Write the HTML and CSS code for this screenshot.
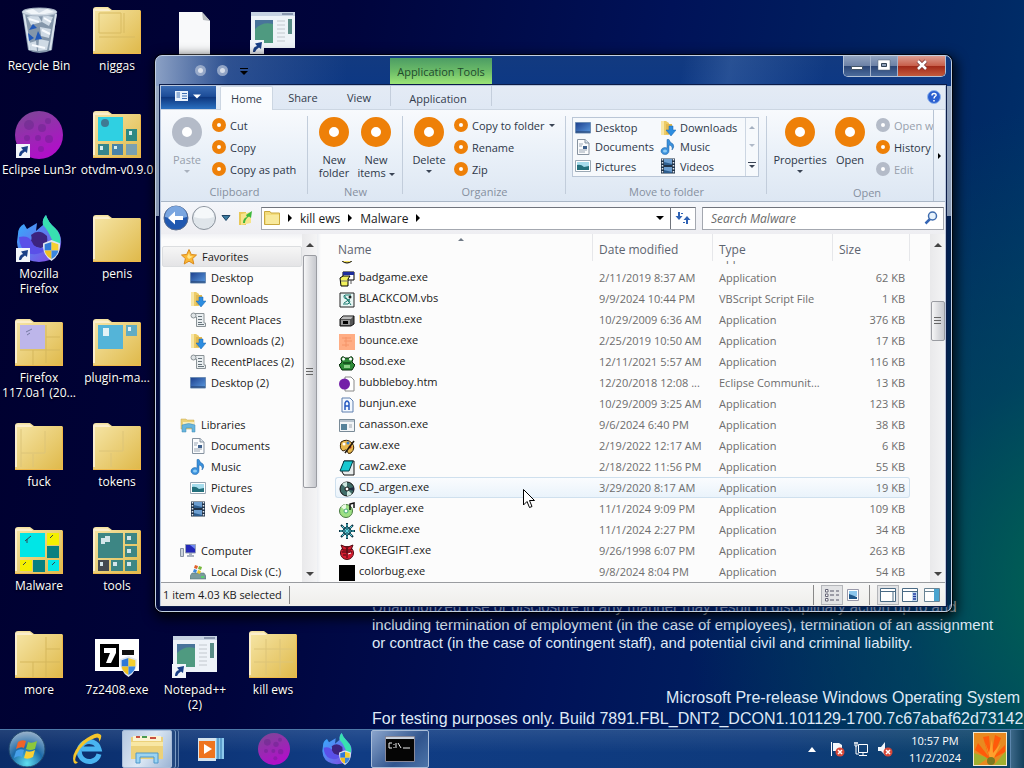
FILE: index.html
```html
<!DOCTYPE html>
<html lang="en">
<head>
    <meta charset="UTF-8">
    <meta name="viewport" content="width=device-width, initial-scale=1.0">
    <title>Malware</title>
    <link rel="stylesheet" href="styles.css">
</head>
<body>
    <!-- shared icons -->
    <svg class="sprite" width="0" height="0">
        <defs>
            <linearGradient id="gold" x1="0" y1="0" x2="1" y2="1">
                <stop offset="0" stop-color="#f6e6a8"/>
                <stop offset="1" stop-color="#dfb94a"/>
            </linearGradient>
            <linearGradient id="blue" x1="0" y1="0" x2="1" y2="1">
                <stop offset="0" stop-color="#1c3f8c"/>
                <stop offset="1" stop-color="#5c9be0"/>
            </linearGradient>
            <linearGradient id="fire" x1="0" y1="0" x2="1" y2="1">
                <stop offset="0" stop-color="#2fb6ff"/>
                <stop offset="1" stop-color="#8a3fe0"/>
            </linearGradient>
            <linearGradient id="moon-fill" x1="0" y1="0" x2="0.4" y2="1">
                <stop offset="0" stop-color="#7a4a94"/>
                <stop offset="1" stop-color="#b010c8"/>
            </linearGradient>
            <radialGradient id="orb" cx="0.5" cy="0.9" r="0.9">
                <stop offset="0" stop-color="#5fe0f0"/>
                <stop offset="0.5" stop-color="#1c6aa8"/>
                <stop offset="1" stop-color="#9db4cc"/>
            </radialGradient>
        </defs>
        <symbol id="folder-big" viewBox="0 0 48 48">
            <path d="M0 3Q0 0 3 0H15L19 3H47.500V47H0Z" fill="url(#gold)"/>
            <path d="M1 1.500H15L18 4H2V44H0V3Z" fill="#fbeecb"/>
            <path d="M0 46.500H48M47.500 4V47" stroke="#f0b848"/>
        </symbol>
        <symbol id="shield" viewBox="0 0 18 20">
            <path d="M9 0L17 3Q18 14 9 20Q0 14 1 3Z" fill="#dfe6ee"/>
            <path d="M9 2V10H2.500V4Z" fill="#2f78d8"/>
            <path d="M9 2L15.500 4V10H9Z" fill="#f5d030"/>
            <path d="M2.500 10H9V18Q3 15 2.500 10Z" fill="#f0c020"/>
            <path d="M9 10H15.500Q15 15 9 18Z" fill="#3a86e0"/>
        </symbol>
        <symbol id="shortcut" viewBox="0 0 14 14">
            <path d="M0 0H14V14H0Z" fill="#f2f5fa"/>
            <path d="M3 12Q3 7 7 6L5 3.500L12 2L11 9L9 7.500Q6 9 5 12Z" fill="#1a3f86"/>
        </symbol>
        <symbol id="moon" viewBox="0 0 48 48">
            <circle cx="24" cy="24" r="24" fill="url(#moon-fill)"/>
            <g fill="#50207a" opacity="0.3">
                <circle cx="14" cy="14" r="5"/><circle cx="27" cy="17" r="4"/>
                <circle cx="23" cy="27" r="3"/><circle cx="34" cy="28" r="4"/>
                <circle cx="12" cy="27" r="3"/><circle cx="33" cy="10" r="3"/>
                <circle cx="26" cy="38" r="3"/>
            </g>
        </symbol>
        <symbol id="firefox" viewBox="0 0 48 48">
            <path d="M3 19Q3 12 9 9L12 14L22 8L21 16L28 10Q27 4 31 0Q33 7 40 13Q47 19 46 29Q44 46 24 47Q3 46 2 27Z" fill="url(#fire)"/>
            <path d="M28 10Q27 4 31 0Q33 7 40 13Q47 19 45 31Q40 36 37 25Q33 15 28 10Z" fill="#38e0b0"/>
            <path d="M16 20Q24 13 32 21Q34 30 26 33Q18 32 14 27Q18 25 16 20Z" fill="#3c2480"/>
            <path d="M4 22Q14 20 17 27Q20 35 32 33Q24 42 13 38Q4 33 4 22Z" fill="#5a50e8"/>
        </symbol>
        <symbol id="panel-app" viewBox="0 0 44 36">
            <path d="M0 0H44V36H0Z" fill="#eef3f8"/>
            <path d="M0 0H44V4H0Z" fill="#c6d2e2"/>
            <path d="M31 1H42V3H31Z" fill="#8a98b0"/>
            <path d="M4 8H22V31H4Z" fill="#49749a"/>
            <path d="M4 17Q12 9 22 12V31H4Z" fill="#4f9a80"/>
            <path d="M26 9H34M26 13H34M26 17H34M26 21H34M26 25H34M26 29H34" stroke="#c2c8ce" stroke-width="1"/>
            <path d="M37 7H41V22H37Z" fill="#598c86"/>
        </symbol>

        <symbol id="desktop" viewBox="0 0 16 16">
            <path d="M0.500 2.500H15.500V13H0.500Z" fill="url(#blue)" stroke="#6d8db4"/>
            <path d="M1 12H15" stroke="#1f3b66"/>
        </symbol>
        <symbol id="downloads" viewBox="0 0 16 16">
            <path d="M1 1H6L9 3V15H1Z" fill="#eccb66"/>
            <path d="M1 1H4V15H1Z" fill="#f8e6a4"/>
            <path d="M6 4H12V14H6Z" fill="#e0b850"/>
            <path d="M9 6H13V10H16L11 16L6 10H9Z" fill="#2c8de0" stroke="#1a66b0" stroke-width="0.500"/>
        </symbol>
        <symbol id="recent" viewBox="0 0 16 16">
            <path d="M4 1.500H14V11H15.500V14.500H6.500V5H2Q1 2 4 1.500Z" fill="#e9eef0" stroke="#8a9296"/>
            <path d="M8 4.500H12M8 7.500H12M8 10.500H12M8 12.500H14" stroke="#67747c"/>
            <circle cx="3.500" cy="3.500" r="2.500" fill="#dfe4e6" stroke="#8a9296"/>
        </symbol>
        <symbol id="documents" viewBox="0 0 16 16">
            <path d="M2.500 0.500H10L14 4V15.500H2.500Z" fill="#fbfcfd" stroke="#8793a0"/>
            <path d="M10 0.500V4H14" fill="#dce4ec" stroke="#8793a0"/>
            <path d="M4 5H8M4 7H7M4 11H12M4 13H10" stroke="#9aa6b4"/>
            <path d="M8 7H12V10H8Z" fill="#3f618c"/>
        </symbol>
        <symbol id="music" viewBox="0 0 16 16">
            <path d="M7 0.500H9Q10 4 13 5Q15 8 12 11Q13 7 9 6V12A4 3.500 0 1 1 7 9Z" fill="#3b91dc" stroke="#1c60a4" stroke-width="0.500"/>
            <ellipse cx="5" cy="12" rx="2" ry="1.500" fill="#8ccbf5"/>
        </symbol>
        <symbol id="pictures" viewBox="0 0 16 16">
            <path d="M0.500 2.500H15.500V13.500H0.500Z" fill="#fff" stroke="#9aa8b4"/>
            <path d="M2 4H14V12H2Z" fill="#a6dcec"/>
            <path d="M2 7Q6 6 9 9L14 8V12H2Z" fill="#23707c"/>
        </symbol>
        <symbol id="videos" viewBox="0 0 16 16">
            <path d="M1 0.500H15V15.500H1Z" fill="#1f3248"/>
            <path d="M4 1H12V7H4ZM4 9H12V15H4Z" fill="#6c9ed0"/>
            <path d="M4 4L12 6V7H4ZM4 12L12 14V15H4Z" fill="#2d5d8e"/>
            <path d="M2.500 1V15M13.500 1V15" stroke="#e5ecf4" stroke-width="1.500" stroke-dasharray="1.500 1.500"/>
        </symbol>
        <symbol id="star" viewBox="0 0 16 16">
            <path d="M8 0.500L10.300 5.500L15.500 6L11.600 9.600L12.800 15L8 12.200L3.200 15L4.400 9.600L0.500 6L5.700 5.500Z" fill="#fbb836" stroke="#d98a1c"/>
            <path d="M8 4L9 7L12 7.500L8 10L6 8Z" fill="#ffe58a"/>
        </symbol>
        <symbol id="libraries" viewBox="0 0 16 16">
            <path d="M1 2H6L7 3H14V12H1Z" fill="#ecd27a" stroke="#c8a850" stroke-width="0.500"/>
            <path d="M3 5H14V9H3Z" fill="#f8eebc"/>
            <path d="M2 8Q9 5 15 8V15H12V11H6V15H2Z" fill="#69b5dc" stroke="#3f88b4" stroke-width="0.500"/>
        </symbol>
        <symbol id="computer" viewBox="0 0 16 16">
            <path d="M5.500 1.500H15.500V10H5.500Z" fill="#2428b8" stroke="#9aa4b8"/>
            <path d="M10 2H15V6Z" fill="#6f88f0"/>
            <path d="M9 10H12V12H14V14H7V12H9Z" fill="#a9b2c0"/>
            <path d="M0.500 5.500H3.500V13.500H0.500Z" fill="#ccd4dc" stroke="#8792a2"/>
        </symbol>
        <symbol id="disk" viewBox="0 0 16 16">
            <path d="M2 9H14L16 12V15H0V12Z" fill="#7a9a9c" stroke="#4d6e72" stroke-width="0.500"/>
            <path d="M11 13H14" stroke="#4ce060" stroke-width="1.500"/>
            <path d="M5 1L8 2L7 5L4 4Z" fill="#e0622c"/><path d="M9 2L12 3L11 6L8 5Z" fill="#78b83c"/>
            <path d="M4 5L7 6L6 9L3 8Z" fill="#3c88d8"/><path d="M8 6L11 7L10 10L7 9Z" fill="#f0c82c"/>
        </symbol>
        <symbol id="folder" viewBox="0 0 16 16">
            <path d="M0.500 1.500H6L7 3H15.500V14.500H0.500Z" fill="#f3dc7c" stroke="#cba93e"/>
            <path d="M2 5H15V14H2Z" fill="#f8e99c"/>
        </symbol>
    </svg>

    <main class="desktop">
        <ul class="icons">
            <li class="icon">
                <svg class="art" viewBox="0 0 48 48">
                    <path d="M7 4H42L37 43Q24 49 13 43Z" fill="#8496aa"/>
                    <path d="M9 7L15 43M41 7L35 43" stroke="#d8e2ec" stroke-width="2"/>
                    <path d="M12 10L22 7L27 15L16 18ZM28 8L38 10L34 19L27 15ZM25 20L36 22L34 31L26 29ZM24 32L34 34L32 43L23 44ZM14 36L21 34L22 44L16 43Z" fill="#cfdae5"/>
                    <path d="M14 12L24 15M27 23L35 27M17 38L30 41M29 11L36 15" stroke="#f8fbff" stroke-width="2"/>
                    <ellipse cx="24.500" cy="5" rx="17.500" ry="4" fill="#d2dbe5" stroke="#a9b7c6"/>
                    <path d="M10 4L18 2L24 6L32 2L39 5L30 7L16 7Z" fill="#f1f5f9"/>
                    <path d="M14 23L18 17L22 21ZM13 26L14 34L19 31ZM23 24L27 32L20 33Z" fill="#2258b8"/>
                </svg>
                <span>Recycle Bin</span>
            </li>
            <li class="icon">
                <svg class="art" viewBox="0 0 48 48"><use href="#folder-big"/><path d="M6 6H28V26H6ZM31 6V26M6 30H42" fill="none" stroke="#d8bb62"/></svg>
                <span>niggas</span>
            </li>
            <li class="icon">
                <svg class="art" viewBox="0 0 48 48"><path d="M8 5H31L39 14V48H8Z" fill="#f8f9fa"/><path d="M31 5L32 13L39 14Z" fill="#b8bcc0"/></svg>
            </li>
            <li class="icon">
                <svg class="art" viewBox="0 0 48 48"><use href="#panel-app" x="2" y="5" width="44" height="36"/><use href="#shortcut" x="1" y="33" width="14" height="14"/></svg>
            </li>

            <li class="icon first">
                <svg class="art" viewBox="0 0 48 48"><use href="#moon"/><use href="#shortcut" x="1" y="33" width="14" height="14"/></svg>
                <span>Eclipse Lun3r</span>
            </li>
            <li class="icon">
                <svg class="art" viewBox="0 0 48 48">
                    <use href="#folder-big"/>
                    <path d="M5 6H30V30H5Z" fill="#2fd0e2"/><path d="M33 18H44V30H33Z" fill="#2d8884"/>
                    <path d="M5 33H16V44H5Z" fill="#36868c"/><path d="M19 33H30V44H19Z" fill="#4a84a8"/><path d="M33 33H44V44H33Z" fill="#7aa0b0"/>
                    <circle cx="12" cy="12" r="4" fill="#3f7a94"/><path d="M7 35H10V39H7ZM21 35H24V38H21ZM36 20H39V24H36Z" fill="#d7eef0"/>
                </svg>
                <span>otvdm-v0.9.0</span>
            </li>

            <li class="icon first">
                <svg class="art" viewBox="0 0 48 48"><use href="#firefox"/><use href="#shield" x="27" y="25" width="19" height="21"/><use href="#shortcut" x="1" y="33" width="14" height="14"/></svg>
                <span>Mozilla<br>Firefox</span>
            </li>
            <li class="icon">
                <svg class="art" viewBox="0 0 48 48"><use href="#folder-big"/></svg>
                <span>penis</span>
            </li>

            <li class="icon first">
                <svg class="art" viewBox="0 0 48 48"><use href="#folder-big"/><path d="M31 6V44M5 31H45M18 31V46M31 18H45" stroke="#d5b75c"/><path d="M5 6H30V30H5Z" fill="#bdb6ea"/><path d="M11 13L17 10M12 16L15 14" stroke="#7378a0"/></svg>
                <span>Firefox<br>117.0a1 (20...</span>
            </li>
            <li class="icon">
                <svg class="art" viewBox="0 0 48 48"><use href="#folder-big"/><path d="M5 6H30V30H5Z" fill="#54b4d8"/><path d="M33 6H44V17H33Z" fill="#60acc4"/><path d="M10 9H16V17H10ZM35 8H38V12H35Z" fill="#e2f2f6"/></svg>
                <span>plugin-ma...</span>
            </li>

            <li class="icon first">
                <svg class="art" viewBox="0 0 48 48"><use href="#folder-big"/><path d="M6 6V30H30V8M6 30V44M18 31V44" fill="none" stroke="#dcc478"/></svg>
                <span>fuck</span>
            </li>
            <li class="icon">
                <svg class="art" viewBox="0 0 48 48"><use href="#folder-big"/><path d="M6 28H30V8M18 30V44" fill="none" stroke="#dcc478"/></svg>
                <span>tokens</span>
            </li>

            <li class="icon first">
                <svg class="art" viewBox="0 0 48 48">
                    <use href="#folder-big"/>
                    <path d="M5 6H30V30H5ZM33 33H44V44H33Z" fill="#00e6e6"/><path d="M32 6H44V18H32ZM5 33H17V44H5Z" fill="#f4f000"/>
                    <path d="M32 19H44V31H32ZM18 33H30V45H18Z" fill="#088080"/><path d="M10 14L16 9M12 16V12M35 11L38 8M8 38L11 35M37 38L40 35" stroke="#345"/>
                </svg>
                <span>Malware</span>
            </li>
            <li class="icon">
                <svg class="art" viewBox="0 0 48 48">
                    <use href="#folder-big"/>
                    <path d="M5 6H30V31H5ZM32 6H44V17H32ZM32 19H44V30H32ZM18 33H30V44H18ZM32 33H44V44H32Z" fill="#3d8684"/><path d="M5 33H16V44H5Z" fill="#444a50"/>
                    <path d="M8 11H12V17H8ZM12 9H17V15H12ZM34 9H38V13H34ZM34 22H38V26H34ZM20 35H24V39H20ZM34 35H38V39H34ZM7 35H10V39H7Z" fill="#d4e6ea"/>
                </svg>
                <span>tools</span>
            </li>

            <li class="icon first">
                <svg class="art" viewBox="0 0 48 48"><use href="#folder-big"/><path d="M31 6V31H5M31 18H45M31 31H45M18 31V46M31 31V46" fill="none" stroke="#d5b75c"/></svg>
                <span>more</span>
            </li>
            <li class="icon">
                <svg class="art" viewBox="0 0 48 48">
                    <path d="M2 8H46V40H2Z" fill="#fff"/><path d="M7 13H26V36H7Z" fill="#000"/>
                    <path d="M11 17H23V22L18 32H13L17 22H11Z" fill="#fff"/><path d="M29 19H41V24H29Z" fill="#111"/>
                    <use href="#shield" x="26" y="25" width="19" height="21"/>
                </svg>
                <span>7z2408.exe</span>
            </li>
            <li class="icon">
                <svg class="art" viewBox="0 0 48 48"><use href="#panel-app" x="2" y="5" width="44" height="36"/><use href="#shortcut" x="1" y="33" width="14" height="14"/></svg>
                <span>Notepad++<br>(2)</span>
            </li>
            <li class="icon">
                <svg class="art" viewBox="0 0 48 48"><use href="#folder-big"/><path d="M17 8V44M31 8V44M5 18H44M5 31H44" stroke="#dcc478"/></svg>
                <span>kill ews</span>
            </li>
        </ul>

        <div class="watermark">
            <p class="legal">Unauthorized use or disclosure in any manner may result in disciplinary action up to and<br>including termination of employment (in the case of employees), termination of an assignment<br>or contract (in the case of contingent staff), and potential civil and criminal liability.</p>
            <p class="system">Microsoft Pre-release Windows Operating System</p>
            <p class="build">For testing purposes only. Build 7891.FBL_DNT2_DCON1.101129-1700.7c67abaf62d73142</p>
        </div>

        <section class="window">
            <header class="title-bar">
                <div class="quick-access">
                    <span class="faint-ring"></span><span class="faint-ring"></span>
                    <svg width="10" height="8" viewBox="0 0 10 8"><path d="M1 1.500H9" stroke="#000"/><path d="M1 4H9L5 8Z" fill="#000"/></svg>
                </div>
                <div class="tools-tab">Application Tools</div>
                <div class="controls">
                    <button type="button" aria-label="Minimize"><svg width="14" height="12" viewBox="0 0 14 12"><path d="M1.500 7.500H12.500V10.500H1.500Z" fill="#fff" stroke="#456"/></svg></button>
                    <button type="button" aria-label="Maximize"><svg width="14" height="12" viewBox="0 0 14 12"><path d="M1 1H13V11H1Z" fill="#fff" stroke="#567" stroke-width="0.500"/><path d="M4.500 4.500H9.500V7.500H4.500Z" fill="#8fa0b8" stroke="#345"/></svg></button>
                    <button type="button" class="close" aria-label="Close"><svg width="14" height="12" viewBox="0 0 14 12"><path d="M3 2L11 10M11 2L3 10" stroke="#733" stroke-width="4"/><path d="M3 2L11 10M11 2L3 10" stroke="#fff" stroke-width="2.500"/></svg></button>
                </div>
            </header>

            <div class="client">
                <nav class="tabs">
                    <button type="button" class="file-tab" aria-label="File">
                        <svg width="30" height="12" viewBox="0 0 30 12"><path d="M1 1H14V11H1Z" fill="#e9f2fc"/><path d="M2.500 3H6M2.500 5H6M2.500 7H6M8 3.500H13M8 6H13M8 8.500H13" stroke="#3f70b4"/><path d="M19 4.500H27L23 8.500Z" fill="#fff"/></svg>
                    </button>
                    <button type="button" class="tab active">Home</button>
                    <button type="button" class="tab share">Share</button>
                    <button type="button" class="tab">View</button>
                    <button type="button" class="tab context">Application</button>
                    <button type="button" class="help" aria-label="Help"><svg width="14" height="14" viewBox="0 0 14 14"><circle cx="7" cy="7" r="6.500" fill="#2a5fd0" stroke="#8fb4ee"/><path d="M5 5.500Q5 3.500 7 3.500Q9.500 3.500 9 5.500Q7 7 7 8.500M7 10V11.500" fill="none" stroke="#fff" stroke-width="1.500"/></svg></button>
                </nav>

                <div class="ribbon">
                    <div class="group clipboard">
                        <div class="tools">
                            <button type="button" class="big" disabled><i class="ring"></i>Paste<b class="drop"></b></button>
                            <div class="stack">
                                <button type="button"><i class="ring"></i>Cut</button>
                                <button type="button"><i class="ring"></i>Copy</button>
                                <button type="button"><i class="ring"></i>Copy as path</button>
                            </div>
                        </div>
                        <div class="group-name">Clipboard</div>
                    </div>
                    <div class="group new">
                        <div class="tools">
                            <button type="button" class="big"><i class="ring"></i>New<br>folder</button>
                            <button type="button" class="big"><i class="ring"></i>New<br><span>items <b class="drop"></b></span></button>
                        </div>
                        <div class="group-name">New</div>
                    </div>
                    <div class="group organize">
                        <div class="tools">
                            <button type="button" class="big"><i class="ring"></i>Delete<b class="drop"></b></button>
                            <div class="stack">
                                <button type="button"><i class="ring"></i>Copy to folder <b class="drop"></b></button>
                                <button type="button"><i class="ring"></i>Rename</button>
                                <button type="button"><i class="ring"></i>Zip</button>
                            </div>
                        </div>
                        <div class="group-name">Organize</div>
                    </div>
                    <div class="group move">
                        <div class="gallery">
                            <div class="places">
                                <button type="button"><svg><use href="#desktop"/></svg>Desktop</button>
                                <button type="button"><svg><use href="#downloads"/></svg>Downloads</button>
                                <button type="button"><svg><use href="#documents"/></svg>Documents</button>
                                <button type="button"><svg><use href="#music"/></svg>Music</button>
                                <button type="button"><svg><use href="#pictures"/></svg>Pictures</button>
                                <button type="button"><svg><use href="#videos"/></svg>Videos</button>
                            </div>
                            <div class="spin">
                                <b class="drop up"></b>
                                <b class="drop dim"></b>
                                <svg width="8" height="7" viewBox="0 0 8 7"><path d="M0 0.500H8" stroke="#3a4454"/><path d="M1 3H7L4 6Z" fill="#3a4454"/></svg>
                            </div>
                        </div>
                        <div class="group-name">Move to folder</div>
                    </div>
                    <div class="group open">
                        <div class="open-body">
                            <div class="tools">
                                <button type="button" class="big"><i class="ring"></i>Properties<b class="drop"></b></button>
                                <button type="button" class="big"><i class="ring"></i>Open</button>
                                <div class="stack">
                                    <button type="button" disabled><i class="ring"></i>Open with</button>
                                    <button type="button"><i class="ring"></i>History</button>
                                    <button type="button" disabled><i class="ring"></i>Edit</button>
                                </div>
                            </div>
                            <div class="group-name">Open</div>
                        </div>
                    </div>
                    <button type="button" class="scroll-right" aria-label="More"><svg width="4" height="8" viewBox="0 0 4 8"><path d="M0 1L3 4L0 7Z" fill="#000"/></svg></button>
                </div>

                <div class="address-row">
                    <button type="button" class="nav-button" aria-label="Back"><svg width="26" height="26" viewBox="0 0 26 26"><circle cx="13" cy="13" r="12" fill="#2058b0" stroke="#5a6c8c"/><path d="M2 12A11 11 0 0 1 24 12Q13 15 2 12Z" fill="#7aa6e0"/><path d="M5 13L12 6.500V11H20V15H12V19.500Z" fill="#fff"/></svg></button>
                    <button type="button" class="nav-button" aria-label="Forward"><svg width="26" height="26" viewBox="0 0 26 26"><circle cx="13" cy="13" r="11.500" fill="#dfe5ea" stroke="#8a929c"/><path d="M3 12A10 10 0 0 1 23 12Q13 15 3 12Z" fill="#f5f8fa"/></svg></button>
                    <button type="button" class="nav-button recent" aria-label="Recent pages"><svg width="10" height="6" viewBox="0 0 10 6"><path d="M1 0.500H9L5 5.500Z" fill="#3a7aa0" stroke="#1f4464"/></svg></button>
                    <button type="button" class="nav-button up-folder" aria-label="Up"><svg width="16" height="16" viewBox="0 0 16 16"><path d="M1 2H8V15H1Z" fill="#e8c858"/><path d="M3 4L13 2V13L3 15Z" fill="#f6e48c"/><path d="M5 13Q5 8 9 7L8 5L14 1L13 8L11 6.500Q7 9 7 13Z" fill="#3db83c"/></svg></button>
                    <div class="address">
                        <svg class="s16"><use href="#folder"/></svg>
                        <b class="crumb"></b><a href="#">kill ews</a>
                        <b class="crumb"></b><a href="#">Malware</a>
                        <b class="crumb"></b>
                        <b class="drop wide"></b>
                        <button type="button" class="refresh" aria-label="Refresh"><svg width="16" height="14" viewBox="0 0 16 14"><path d="M3 1H5V5H7.500L4 9L0.500 5H3ZM6 2H8V3H6Z" fill="#2f62b4"/><path d="M11 13H13V9H15.500L12 5L8.500 9H11ZM8 11H10V12H8Z" fill="#2f62b4"/></svg></button>
                    </div>
                    <div class="search">
                        <input type="text" placeholder="Search Malware" aria-label="Search Malware">
                        <svg width="14" height="14" viewBox="0 0 14 14"><path d="M1.500 12.500L6 8" stroke="#3565b4" stroke-width="2.500"/><circle cx="8.500" cy="5" r="4" fill="#e6f2fc" stroke="#3f6cae" stroke-width="1.500"/></svg>
                    </div>
                </div>

                <div class="panes">
                    <ul class="tree">
                        <li class="root selected"><svg><use href="#star"/></svg>Favorites</li>
                        <li><svg><use href="#desktop"/></svg>Desktop</li>
                        <li><svg><use href="#downloads"/></svg>Downloads</li>
                        <li><svg><use href="#recent"/></svg>Recent Places</li>
                        <li><svg><use href="#downloads"/></svg>Downloads (2)</li>
                        <li><svg><use href="#recent"/></svg>RecentPlaces (2)</li>
                        <li><svg><use href="#desktop"/></svg>Desktop (2)</li>
                        <li class="root spaced"><svg><use href="#libraries"/></svg>Libraries</li>
                        <li><svg><use href="#documents"/></svg>Documents</li>
                        <li><svg><use href="#music"/></svg>Music</li>
                        <li><svg><use href="#pictures"/></svg>Pictures</li>
                        <li><svg><use href="#videos"/></svg>Videos</li>
                        <li class="root spaced"><svg><use href="#computer"/></svg>Computer</li>
                        <li><svg><use href="#disk"/></svg>Local Disk (C:)</li>
                    </ul>
                    <div class="scrollbar tree-scroll">
                        <b class="arrow-up"></b><div class="thumb"></div><b class="arrow-down"></b>
                    </div>
                    <div class="list">
                        <table>
                            <thead>
                                <tr><th class="name">Name</th><th class="date">Date modified</th><th class="type">Type</th><th class="size">Size</th></tr>
                            </thead>
                            <tbody>
                                <tr class="clipped"><td><div><svg viewBox="0 0 16 16"><circle cx="8" cy="8" r="7" fill="#f4e060" stroke="#000"/></svg></div></td><td></td><td><div>Application</div></td><td></td></tr>
                                <tr><td><svg viewBox="0 0 16 16"><path d="M4 1H15V9H4Z" fill="#fff" stroke="#000"/><path d="M4 1H15V4H4Z" fill="#1c2c9c"/><path d="M12 9V13" stroke="#555"/><path d="M1 7L4 5H11L9 8V15H2Z" fill="#f2f25c" stroke="#000"/><path d="M2 10H9" stroke="#777"/></svg>badgame.exe</td><td>2/11/2019 8:37 AM</td><td>Application</td><td>62 KB</td></tr>
                                <tr><td><svg viewBox="0 0 16 16"><path d="M1 1H15V15H1Z" fill="#e8f6f4" stroke="#222"/><path d="M12 3H6Q3 6 8 7Q13 9 9 12H4M5 3L12 13M11 7L5 11" fill="none" stroke="#16786c"/><circle cx="11" cy="5" r="1.500" fill="#222"/></svg>BLACKCOM.vbs</td><td>9/9/2024 10:44 PM</td><td>VBScript Script File</td><td>1 KB</td></tr>
                                <tr><td><svg viewBox="0 0 16 16"><path d="M1 6L4 3H15V11L12 13H1Z" fill="#555" stroke="#111"/><path d="M1.500 6L4 3.500H14L12 6Z" fill="#bbb"/><path d="M2 7H11V12H2Z" fill="#999"/><path d="M4 8H9V11H4Z" fill="#000"/></svg>blastbtn.exe</td><td>10/29/2009 6:36 AM</td><td>Application</td><td>376 KB</td></tr>
                                <tr><td><svg viewBox="0 0 16 16"><path d="M0 0H16V16H0Z" fill="#ffad84"/><path d="M3 4H12M5 7H13M3 11H10M7 3V13" stroke="#f59468"/></svg>bounce.exe</td><td>2/25/2019 10:50 AM</td><td>Application</td><td>17 KB</td></tr>
                                <tr><td><svg viewBox="0 0 16 16"><path d="M2 4Q3 0 6 3H10Q13 0 14 4L13 7L16 10L13 15H3L0 10L3 7Z" fill="#2e8c38" stroke="#052808"/><circle cx="4.500" cy="4" r="1.500" fill="#fff"/><circle cx="11.500" cy="4" r="1.500" fill="#fff"/><path d="M5 10H11V13H5Z" fill="#8cd088"/><path d="M4 8H12" stroke="#032206"/></svg>bsod.exe</td><td>12/11/2021 5:57 AM</td><td>Application</td><td>116 KB</td></tr>
                                <tr><td><svg viewBox="0 0 16 16"><path d="M6 1H12L15 4V15H6Z" fill="#fff" stroke="#888"/><circle cx="5.500" cy="8" r="5.500" fill="#7420a8"/></svg>bubbleboy.htm</td><td>12/20/2018 12:08 ...</td><td>Eclipse Communit...</td><td>13 KB</td></tr>
                                <tr><td><svg viewBox="0 0 16 16"><path d="M3 1H11L14 4V15H3Z" fill="#f2f8ff" stroke="#5f7fae"/><path d="M6 13V6Q8 2 10 6V13M6 9H10" fill="none" stroke="#2458c0" stroke-width="1.500"/></svg>bunjun.exe</td><td>10/29/2009 3:25 AM</td><td>Application</td><td>123 KB</td></tr>
                                <tr><td><svg viewBox="0 0 16 16"><path d="M0.500 1.500H15.500V13.500H0.500Z" fill="#f2f5f7" stroke="#798a97"/><path d="M1 3H15" stroke="#bac6d0" stroke-width="2"/><path d="M2 6H8V12H2Z" fill="#55829a"/><path d="M10 6H13V10H10Z" fill="#c8cdd2"/></svg>canasson.exe</td><td>9/6/2024 6:40 PM</td><td>Application</td><td>38 KB</td></tr>
                                <tr><td><svg viewBox="0 0 16 16"><path d="M2 3Q8 -1 13 4Q17 9 12 14Q9 16 8 12Q7 10 4 12Q0 10 2 3Z" fill="#e8b84c" stroke="#3a2408"/><circle cx="5" cy="5" r="1.500" fill="#fff"/><circle cx="9" cy="4" r="1.500" fill="#3c80d0"/><circle cx="11" cy="8" r="1.500" fill="#b02818"/><path d="M15 2L6 14" stroke="#221a10" stroke-width="1.500"/></svg>caw.exe</td><td>2/19/2022 12:17 AM</td><td>Application</td><td>6 KB</td></tr>
                                <tr><td><svg viewBox="0 0 16 16"><path d="M5 1H15V15H5L3 12Z" fill="#e8ecec" stroke="#111"/><path d="M5 1H14L10 11H1Z" fill="#18c8d0" stroke="#033a44"/></svg>caw2.exe</td><td>2/18/2022 11:56 PM</td><td>Application</td><td>55 KB</td></tr>
                                <tr class="hover"><td><svg viewBox="0 0 16 16"><circle cx="8" cy="8" r="7" fill="#3f6c68" stroke="#111"/><path d="M8 8L3 3A7 7 0 0 1 8 1ZM8 8L13 13A7 7 0 0 1 8 15Z" fill="#cde8e0"/><path d="M8 8L15 6V10Z" fill="#1f2c40"/><circle cx="8" cy="8" r="2" fill="#fff" stroke="#111"/></svg>CD_argen.exe</td><td>3/29/2020 8:17 AM</td><td>Application</td><td>19 KB</td></tr>
                                <tr><td><svg viewBox="0 0 16 16"><circle cx="7" cy="9" r="6.500" fill="#9ee084" stroke="#487840"/><path d="M7 9L2 5A7 7 0 0 1 7 2Z" fill="#eafbe4"/><circle cx="7" cy="9" r="2" fill="#fff" stroke="#4a7"/><path d="M11 8V2L15 1V6" fill="none" stroke="#111" stroke-width="1.500"/></svg>cdplayer.exe</td><td>11/1/2024 9:09 PM</td><td>Application</td><td>109 KB</td></tr>
                                <tr><td><svg viewBox="0 0 16 16"><path d="M8 0V16M0 8H16M2 2L14 14M14 2L2 14" stroke="#0c3848" stroke-width="2"/><path d="M8 1V15M1 8H15M3 3L13 13M13 3L3 13" stroke="#5fd6e0"/><path d="M8 3L13 8L8 13L3 8Z" fill="none" stroke="#125060"/></svg>Clickme.exe</td><td>11/1/2024 2:27 PM</td><td>Application</td><td>34 KB</td></tr>
                                <tr><td><svg viewBox="0 0 16 16"><circle cx="8" cy="9" r="6.500" fill="#d81c30" stroke="#500810"/><path d="M2 1L7 3L8 5L9 3L14 1L12 6H4Z" fill="#d81c30" stroke="#500810"/><path d="M3 8H13M8 5V14M4 11H7" stroke="#3c0810"/><path d="M9 10L12 9" stroke="#fff"/></svg>COKEGIFT.exe</td><td>9/26/1998 6:07 PM</td><td>Application</td><td>263 KB</td></tr>
                                <tr><td><svg viewBox="0 0 16 16"><path d="M0 0H16V16H0Z" fill="#000"/></svg>colorbug.exe</td><td>9/8/2024 8:04 PM</td><td>Application</td><td>54 KB</td></tr>
                            </tbody>
                        </table>
                    </div>
                    <div class="scrollbar list-scroll">
                        <b class="arrow-up"></b><div class="thumb"></div><b class="arrow-down"></b>
                    </div>
                </div>

                <footer class="status">
                    <span class="count">1 item 4.03 KB selected</span>
                    <div class="views">
                        <button type="button" class="on" aria-label="Details"><svg width="16" height="14" viewBox="0 0 16 14"><path d="M1.500 1.500H4V4H1.500ZM1.500 6H4V8.500H1.500ZM1.500 10.500H4V13H1.500Z" fill="#fff" stroke="#667"/><path d="M6 3H10M12 3H15M6 7H10M12 7H15M6 12H10M12 12H15" stroke="#556"/></svg></button>
                        <button type="button" aria-label="Thumbnails"><svg width="14" height="14" viewBox="0 0 14 14"><path d="M1.500 1.500H12.500V12.500H1.500Z" fill="#fff" stroke="#99a"/><path d="M3 3H11V8H3Z" fill="#8cc6ec"/><path d="M3 6L11 9V11H3Z" fill="#1f5688"/></svg></button>
                    </div>
                    <div class="views">
                        <button type="button" class="on" aria-label="No pane"><svg width="16" height="14" viewBox="0 0 16 14"><path d="M0.500 0.500H15.500V13.500H0.500ZM0.500 3.500H15.500M13 3V13" fill="#fff" stroke="#4a6a84"/></svg></button>
                        <button type="button" aria-label="Details pane"><svg width="16" height="14" viewBox="0 0 16 14"><path d="M0.500 0.500H15.500V13.500H0.500ZM0.500 3.500H15.500" fill="#fff" stroke="#4a6a84"/><path d="M10 4H15V13H10Z" fill="#c2daf0"/><path d="M11 6H14M11 8.500H14M11 11H14" stroke="#2038a0" stroke-width="1.500"/></svg></button>
                        <button type="button" aria-label="Preview pane"><svg width="16" height="14" viewBox="0 0 16 14"><path d="M0.500 0.500H15.500V13.500H0.500ZM0.500 3.500H15.500" fill="#fff" stroke="#6a8494"/><path d="M10 1H15V13H10Z" fill="#4aa4d0"/></svg></button>
                    </div>
                </footer>
            </div>
        </section>

        <svg class="cursor" width="12" height="20" viewBox="0 0 12 20"><path d="M0.500 0.500V16L4 12.500L6.500 18.500L9 17.500L6.500 11.500H11.500Z" fill="#fff" stroke="#000"/></svg>

        <footer class="taskbar">
            <button type="button" class="task start" aria-label="Start"><svg width="40" height="38" viewBox="0 0 40 38"><circle cx="20" cy="19" r="18" fill="url(#orb)" stroke="#22486c"/><path d="M11 12Q15 9 19 11L17 18Q14 16 9 19Z" fill="#f06428"/><path d="M21 12Q25 14 30 11L28 19Q23 21 19 19Z" fill="#8cc83c"/><path d="M9 21Q13 18 17 20L15 27Q11 25 7 28Z" fill="#46a0ea"/><path d="M19 21Q23 23 28 20L26 27Q21 30 17 28Z" fill="#fbd034"/></svg></button>
            <button type="button" class="task" aria-label="Internet Explorer"><svg width="34" height="34" viewBox="0 0 34 34"><path d="M28 22A10 10 0 1 1 28 17H11" fill="none" stroke="#49b4f0" stroke-width="5"/><path d="M3 31Q-1 22 12 9Q26 -2 30 3Q31 6 28 10Q29 4 24 6Q12 10 6 22Q2 30 7 30Q5 33 3 31Z" fill="#f4c52c"/></svg></button>
            <button type="button" class="task active stacked" aria-label="Explorer"><svg width="34" height="32" viewBox="0 0 34 32"><path d="M1 4H33V26H1Z" fill="#ecd17a"/><path d="M3 3H31V8H3Z" fill="#fbf3d2"/><path d="M6 3H10V5H6ZM20 4H26V6H20Z" fill="#c85040"/><path d="M12 3H17V5H12Z" fill="#4a9a50"/><path d="M1 9H33V13H1Z" fill="#f8e7a4"/><path d="M6 30V20H28V30H24V24H10V30Z" fill="#9cd4f2" stroke="#4c98cc"/></svg></button>
            <button type="button" class="task" aria-label="Media Player"><svg width="28" height="26" viewBox="0 0 28 26"><path d="M6 2H27V23H6Z" fill="#8cc8ec"/><path d="M21 2V23M24 2V23" stroke="#2f74ac"/><path d="M1 2H19V25H1Z" fill="#d5e4ee"/><path d="M2 5H18V22H2Z" fill="#ee7420"/><path d="M7 8L15 13L7 18Z" fill="#fff"/></svg></button>
            <button type="button" class="task" aria-label="Eclipse"><svg width="32" height="32"><use href="#moon"/></svg></button>
            <button type="button" class="task" aria-label="Firefox"><svg width="32" height="32" viewBox="0 0 48 48"><use href="#firefox"/><use href="#shield" x="26" y="26" width="20" height="22"/></svg></button>
            <button type="button" class="task active" aria-label="Command Prompt"><svg width="30" height="26" viewBox="0 0 30 26"><path d="M0.500 0.500H29.500V25.500H0.500Z" fill="#050505" stroke="#889"/><path d="M1 1H29V3H1Z" fill="#c8d0dc"/><path d="M7 7H4V12H7M9 8V9M9 11V12M11 7V12M13 7L16 12M18 12H25" fill="none" stroke="#eee"/></svg></button>

            <div class="tray">
                <svg width="8" height="5" viewBox="0 0 8 5"><path d="M4 0L8 5H0Z" fill="#fff"/></svg>
                <svg width="16" height="16" viewBox="0 0 16 16"><path d="M2.500 1V15" stroke="#fff"/><path d="M4 2H10L13 4V10H4Z" fill="#f4f8fc"/><circle cx="11" cy="11" r="4.500" fill="#d84838"/><path d="M9 9L13 13M13 9L9 13" stroke="#fff" stroke-width="1.500"/></svg>
                <svg width="16" height="16" viewBox="0 0 16 16"><path d="M5.500 3.500H14.500V11.500H5.500ZM10 12V14.500M6 14.500H14M1 2H5M2 1V5H4V1M3 5V13H6" fill="none" stroke="#fff"/></svg>
                <svg width="16" height="16" viewBox="0 0 16 16"><path d="M1 6H4L8 1V14L4 10H1Z" fill="#f4f8fc"/><circle cx="11" cy="11" r="4.500" fill="#d84838"/><path d="M9 9L13 13M13 9L9 13" stroke="#fff" stroke-width="1.500"/></svg>
                <div class="clock">10:57 PM<br>11/2/2024</div>
                <svg class="user" viewBox="0 0 32 32"><path d="M0 0H32V32H0Z" fill="#e88a20"/><path d="M0 20L14 25L4 32H0ZM32 18V32H20Z" fill="#a0b030"/><path d="M16 27L1 17L4 10L15 24L9 4L15 3L17 24L21 2L27 5L19 24L31 12V19Z" fill="#ff5a0a"/><path d="M16 26L11 9L15 20L18 6L19 20L27 10L20 25Z" fill="#ffa02c"/><circle cx="17" cy="28" r="4" fill="#7c7a20"/></svg>
            </div>
            <button type="button" class="show-desktop" aria-label="Show desktop"></button>
        </footer>
    </main>
</body>
</html>
```
FILE: styles.css
```css
* {
    box-sizing: border-box;
}

body {
    margin: 0;
    font-family: "Open Sans", "Noto Sans", sans-serif;
    font-size: 12px;
    line-height: 15px;
    color: #1a1a1a;
}

button {
    font: inherit;
    color: inherit;
    background: none;
    border: 0;
    padding: 0;
}

ul, p {
    margin: 0;
    padding: 0;
    list-style: none;
}

.sprite {
    position: absolute;
}

/* Desktop */
.desktop {
    position: relative;
    height: 100vh;
    overflow: hidden;
    background:
        radial-gradient(ellipse 400px 480px at 106% 76%, rgba(0, 108, 76, 0.9), rgba(0, 84, 84, 0.5) 45%, transparent),
        linear-gradient(100deg, #00002e 0%, #00043c 30%, #001258 58%, #002864 85%, #003870 100%);
}

.icons {
    display: grid;
    grid-template-columns: repeat(4, 78px);
    grid-auto-rows: 104px;
    padding-top: 7px;
}

.icon {
    display: flex;
    flex-direction: column;
    align-items: center;
    gap: 3px;
    color: #fff;
    text-align: center;
    white-space: nowrap;
    text-shadow: 0 1px 2px #000;
}

.icon.first {
    grid-column: 1;
}

.art {
    width: 48px;
    height: 48px;
    flex: none;
}

.watermark {
    position: absolute;
    right: 4px;
    bottom: 39px;
    width: 648px;
    color: #dfe9f6;
    font: 16px/18px "Liberation Sans", Arial, sans-serif;
    white-space: nowrap;
}

.legal {
    font-size: 15px;
}

.system {
    margin-top: 35px;
    text-align: right;
    line-height: 22px;
}

.build {
    line-height: 20px;
}

/* Window frame */
.window {
    position: absolute;
    top: 55px;
    left: 155px;
    right: 72px;
    bottom: 156px;
    display: flex;
    flex-direction: column;
    padding: 0 5px 5px 4px;
    border: 1px solid #c3d0e2;
    border-radius: 7px;
    background:
        linear-gradient(90deg, rgba(160, 178, 208, 0.85), rgba(90, 116, 168, 0.4) 9%, transparent 24%) 0 0 / 100% 30px no-repeat,
        linear-gradient(100deg, transparent 66%, rgba(110, 150, 205, 0.25) 72%, transparent 84%) 0 0 / 100% 30px no-repeat,
        linear-gradient(#123a80, #0d3884) 0 0 / 100% 30px no-repeat,
        linear-gradient(#98a9c2, #8596b0) 0 30px / 100% 130px no-repeat,
        rgba(4, 18, 66, 0.55);
    box-shadow: 0 0 0 1px rgba(0, 0, 0, 0.7), 2px 4px 12px 3px rgba(0, 0, 0, 0.75);
}

.title-bar {
    display: flex;
    flex: none;
    height: 29px;
}

.quick-access {
    display: flex;
    align-items: center;
    gap: 11px;
    flex: 0 0 230px;
    padding-left: 35px;
}

.faint-ring {
    width: 11px;
    height: 11px;
    border: 3px solid #a9b8d2;
    border-radius: 50%;
    background: #fff;
    opacity: 0.8;
}

.tools-tab {
    width: 102px;
    margin-top: 2px;
    padding-top: 6px;
    text-align: center;
    white-space: nowrap;
    font-size: 11px;
    color: #214a2c;
    background: linear-gradient(#4c9c64, #6cbc68 50%, #a0e878);
}

.controls {
    display: flex;
    margin-left: auto;
    height: 21px;
    border: 1px solid #b4c2d6;
    border-top: 0;
    border-radius: 0 0 5px 5px;
    overflow: hidden;
}

.controls button {
    width: 27px;
    border-right: 1px solid #a5b4cc;
    background: linear-gradient(#91a3bf, #6d82a6 48%, #2a4474 50%, #4d6c9c);
}

.controls .close {
    width: 47px;
    border-right: 0;
    background: linear-gradient(#dc9c90, #c8604c 48%, #a02818 50%, #c45a3c);
}

.client {
    display: flex;
    flex: 1;
    flex-direction: column;
    min-height: 0;
    border: 1px solid #b8c6dc;
    border-width: 1px 1px 0;
    outline: 1px solid #0c1c48;
    background: #fcfcfc;
}

/* Ribbon tabs */
.tabs {
    display: flex;
    flex: none;
    height: 24px;
    background: linear-gradient(#e4ebf5, #dfe8f4);
    border-bottom: 1px solid #ccd6e2;
    color: #333c4c;
    font-size: 11px;
}

.file-tab {
    width: 55px;
    color: #fff;
    background: linear-gradient(#3a6cb4, #1c4c98 45%, #0e3880 50%, #2a70c0);
}

.tab {
    width: 56px;
}

.tab.active {
    width: 53px;
    height: 24px;
    margin-left: 4px;
    border: 1px solid #ccd6e2;
    border-bottom: 0;
    border-radius: 2px 2px 0 0;
    background: #fafcfe;
}

.tab.share {
    margin-left: 2px;
}

.tab.context {
    width: 102px;
    height: 20px;
    margin-left: 3px;
    padding: 4px 6px 0 0;
    border: 1px solid #c4cedc;
    border-width: 0 1px;
}

.help {
    margin-left: auto;
    padding: 2px 4px 0 0;
}

/* Ribbon */
.ribbon {
    display: flex;
    flex: none;
    height: 92px;
    border-bottom: 1px solid #a9b6c6;
    background: linear-gradient(#f8fafd, #e9f0f8 50%, #dde7f3);
    color: #2d3748;
    font-size: 11px;
}

.group {
    position: relative;
    display: flex;
    flex-direction: column;
    flex: none;
    padding-top: 4px;
}

.group:not(.open)::after {
    content: "";
    position: absolute;
    top: 6px;
    right: 0;
    height: 78px;
    border-right: 1px solid #c2cddb;
}

.clipboard {
    width: 147px;
}

.new {
    width: 95px;
}

.organize {
    width: 163px;
}

.move {
    width: 201px;
}

.group.open {
    flex: 1;
    min-width: 0;
    overflow: hidden;
}

.open-body {
    width: 200px;
}

.tools {
    display: flex;
    height: 70px;
    padding-left: 5px;
    white-space: nowrap;
}

.big {
    display: flex;
    flex-direction: column;
    align-items: center;
    width: 42px;
    padding-top: 3px;
    line-height: 13px;
}

.ring {
    flex: none;
    width: 14px;
    height: 14px;
    border: 5px solid #ee8008;
    border-radius: 50%;
    background: #fff;
}

.big .ring {
    width: 30px;
    height: 30px;
    margin-bottom: 6px;
    border-width: 10px;
}

.big > .drop {
    margin-top: 4px;
}

button:disabled {
    color: #979fac;
}

button:disabled .ring {
    border-color: #b4bbc8;
}

.open .big {
    width: 44px;
}

.open .big:first-child {
    width: 56px;
}

.stack {
    display: flex;
    flex-direction: column;
    padding-left: 4px;
}

.stack button {
    display: flex;
    align-items: center;
    gap: 4px;
    height: 22px;
}

.drop {
    display: inline-block;
    flex: none;
    vertical-align: middle;
    border: 3px solid transparent;
    border-top-color: #3a4454;
    border-bottom: 0;
}

button:disabled .drop {
    border-top-color: #a9b1bd;
}

.group-name {
    text-align: center;
    color: #8690a0;
    line-height: 18px;
}

.gallery {
    display: flex;
    width: 187px;
    height: 61px;
    margin: 3px 0 6px 6px;
    border: 1px solid #bac6d6;
    background: #f6f9fc;
}

.places {
    display: grid;
    grid-template-columns: 85px 85px;
    flex: 1;
    padding-left: 2px;
}

.places button {
    display: flex;
    align-items: center;
    gap: 4px;
    white-space: nowrap;
}

.places svg,
.tree svg,
.s16 {
    flex: none;
    width: 16px;
    height: 16px;
}

.spin {
    display: flex;
    flex-direction: column;
    justify-content: space-around;
    align-items: center;
    width: 14px;
    border-left: 1px solid #ccd6e2;
}

.up {
    border: 3px solid transparent;
    border-bottom-color: #a4b0c0;
    border-top: 0;
}

.dim {
    border-top-color: #b0bac8;
}

.scroll-right {
    width: 12px;
    border-left: 1px solid #b8c4d4;
}

/* Address row */
.address-row {
    display: flex;
    flex: none;
    align-items: center;
    height: 32px;
    padding: 0 1px 0 2px;
    background: linear-gradient(#f4f6fa, #eeeef2);
}

.nav-button {
    display: flex;
    margin-right: 2px;
}

.recent {
    margin: 0 7px 0 2px;
}

.up-folder {
    margin-right: 7px;
}

.address {
    display: flex;
    flex: 1;
    align-items: center;
    height: 23px;
    padding-left: 2px;
    border: 1px solid #a4a8b0;
    border-top-color: #70747c;
    background: #fff;
}

.address a {
    color: inherit;
    text-decoration: none;
}

.crumb {
    margin: 0 8px;
    border: 4px solid transparent;
    border-left-color: #000;
    border-right: 0;
}

.wide {
    margin-left: auto;
    margin-right: 6px;
    border-width: 4px;
    border-bottom: 0;
    border-top-color: #000;
}

.refresh {
    display: flex;
    align-items: center;
    justify-content: center;
    align-self: stretch;
    width: 25px;
    border-left: 1px solid #70747c;
}

.search {
    display: flex;
    align-items: center;
    width: 242px;
    height: 23px;
    margin-left: 6px;
    padding-right: 5px;
    border: 1px solid #a4a8b0;
    border-top-color: #70747c;
    background: #fff;
}

.search input {
    flex: 1;
    min-width: 0;
    padding: 0 8px;
    border: 0;
    font: italic 12px "Open Sans", sans-serif;
    background: none;
}

.search input::placeholder {
    color: #6a6a6a;
}

/* Panes */
.panes {
    display: flex;
    flex: 1;
    min-height: 0;
    background: linear-gradient(#f1f2f5, #fcfcfc 6px);
    font-size: 11px;
}

.tree {
    width: 141px;
    padding-top: 12px;
    overflow: hidden;
    white-space: nowrap;
}

.tree li {
    display: flex;
    align-items: center;
    gap: 5px;
    height: 21px;
    padding-left: 29px;
}

.tree .root {
    padding-left: 19px;
}

.tree .selected {
    margin-left: 1px;
    padding-left: 18px;
    border: 1px solid #dcdee0;
    border-radius: 2px;
    background: linear-gradient(#f6f6f6, #e4e4e6);
}

.tree .spaced {
    margin-top: 21px;
}

.scrollbar {
    display: flex;
    flex-direction: column;
    align-items: center;
    width: 15px;
    padding: 9px 0 6px;
    background: linear-gradient(90deg, #e9e9eb, #f4f4f5);
}

.arrow-up,
.arrow-down {
    border: 4px solid transparent;
    border-bottom-color: #444;
    border-top: 0;
}

.arrow-down {
    margin-top: auto;
    border: 4px solid transparent;
    border-top-color: #444;
    border-bottom: 0;
}

/* thumb with three grip lines */
.thumb {
    width: 14px;
    border: 1px solid #9a9ca2;
    border-radius: 2px;
    background:
        repeating-linear-gradient(#666 0 1px, transparent 1px 3px) center / 7px 8px no-repeat,
        linear-gradient(90deg, #f6f6f7, #dcdde0 50%, #c6c8ce);
}

.tree-scroll .thumb {
    height: 70%;
    margin-top: 8px;
}

.list-scroll .thumb {
    height: 40px;
    margin-top: 54px;
}

.list {
    flex: 1;
    padding-left: 18px;
    overflow: hidden;
    background: linear-gradient(90deg, #eceef2, #fcfcfc 4px);
}

table {
    width: 575px;
    table-layout: fixed;
    border-collapse: separate;
    border-spacing: 0;
    white-space: nowrap;
}

th {
    height: 27px;
    padding: 3px 0 0 6px;
    border-right: 1px solid #e6e7ea;
    text-align: left;
    font-weight: normal;
    font-size: 12px;
    color: #5c6470;
}

.name {
    position: relative;
    width: 258px;
    padding-left: 3px;
}

/* sort marker */
.name::before {
    content: "";
    position: absolute;
    top: 4px;
    left: 123px;
    border: 3px solid transparent;
    border-bottom-color: #707a86;
    border-top: 0;
}

.date {
    width: 120px;
}

.type {
    width: 120px;
}

td {
    height: 21px;
    padding: 0 0 0 6px;
    border: 1px solid transparent;
    border-width: 1px 0;
    line-height: 17px;
    color: #6d6d6d;
    overflow: hidden;
}

td:first-child {
    padding-left: 4px;
    color: #1a1a1a;
}

td:last-child {
    padding-right: 5px;
    text-align: right;
}

td svg {
    width: 16px;
    height: 16px;
    margin-right: 4px;
    vertical-align: middle;
}

/* row scrolled under the header */
.clipped td {
    height: 6px;
    line-height: 21px;
    border: 0;
}

.clipped div {
    display: flex;
    align-items: flex-end;
    height: 6px;
    overflow: hidden;
}

.clipped svg {
    margin-bottom: 3px;
}

.hover td {
    border-color: #cfe0ee;
    background: linear-gradient(#fafcfe, #eaf3fb);
}

.hover td:first-child {
    padding-left: 3px;
    border-left-width: 1px;
    border-radius: 3px 0 0 3px;
}

.hover td:last-child {
    padding-right: 4px;
    border-right-width: 1px;
    border-radius: 0 3px 3px 0;
}

/* Status bar */
.status {
    display: flex;
    flex: none;
    align-items: center;
    height: 24px;
    padding: 2px;
    border-top: 1px solid #9a9ca0;
    background: linear-gradient(#f7f7f7, #efeeea);
    font-size: 11px;
}

.count {
    margin-right: auto;
    padding-right: 7px;
    border-right: 1px solid #888;
    line-height: 18px;
}

.views {
    display: flex;
    align-items: center;
    margin-left: 6px;
    padding-left: 7px;
    border-left: 1px solid #888;
}

.views button {
    display: flex;
    padding: 2px;
    border: 1px solid transparent;
}

.views .on {
    border-color: #b4b6ba;
    background: #e2e3e5;
}

.cursor {
    position: absolute;
    top: 489px;
    left: 523px;
}

/* Taskbar */
.taskbar {
    position: absolute;
    left: 0;
    right: 0;
    bottom: 0;
    display: flex;
    align-items: center;
    height: 39px;
    border-top: 1px solid #4c78a8;
    background:
        linear-gradient(rgba(255, 255, 255, 0.1), transparent 60%),
        linear-gradient(90deg, #0a2c68, #103c84 35%, #0e3a7c 75%, #0b4464);
}

.task {
    display: flex;
    align-items: center;
    justify-content: center;
    width: 58px;
    height: 38px;
    margin-right: 5px;
}

.start {
    width: 54px;
}

.task.active {
    border: 1px solid #a8bcd8;
    border-radius: 2px;
    background: linear-gradient(135deg, #8aa4cc, #31558e 60%, #4c74a8);
}

.task.stacked {
    width: 50px;
    margin: 0 10px 0 0;
    background: linear-gradient(120deg, #b6c8e0, #dce8f4 50%, #9cb4d4);
    box-shadow: 3px 0 0 #23487f, 4px 0 0 #7c9cc4, 6px 0 0 #1c4078, 7px 0 0 #6484b0;
}

.tray {
    display: flex;
    align-items: center;
    gap: 8px;
    margin-left: auto;
}

.tray > svg:first-child {
    margin-right: 5px;
}

.clock {
    width: 60px;
    margin-left: 4px;
    text-align: center;
    color: #fff;
    font-size: 11px;
    line-height: 17px;
}

.user {
    width: 34px;
    height: 34px;
    border: 1px solid #f4ead0;
}

.show-desktop {
    width: 14px;
    height: 38px;
    margin-left: 3px;
    border-left: 1px solid #5c86ac;
    background: linear-gradient(90deg, #3c6888, #12405c);
}
```
